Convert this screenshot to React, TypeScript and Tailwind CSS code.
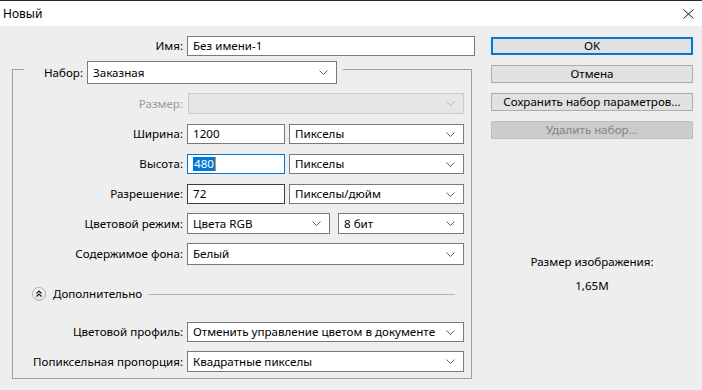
import React from 'react';

const FONT = '"Noto Sans", "Open Sans", sans-serif';

// chevron used by all dropdowns
const Chevron: React.FC<{ disabled?: boolean }> = ({ disabled }) => (
  <svg width="9" height="5" viewBox="0 0 9 5" className="shrink-0">
    <path d="M0.5 0.5 L4.5 4.5 L8.5 0.5" fill="none" stroke={disabled ? '#b8b8b8' : '#606060'} strokeWidth="1" />
  </svg>
);

interface SelectProps {
  value?: string;
  width: string;
  height?: string;
  disabled?: boolean;
}

const Select: React.FC<SelectProps> = ({ value, width, height = 'h-[21px]', disabled }) => (
  <div
    className={`${width} ${height} flex items-center justify-between pl-[5px] pr-[8px] border ${
      disabled ? 'bg-[#e6e6e6] border-[#cccccc]' : 'bg-white border-[#7a7a7a]'
    }`}
  >
    <span className="whitespace-nowrap leading-[16px] text-black">{value}</span>
    <Chevron disabled={disabled} />
  </div>
);

const Input: React.FC<{ value: string; width: string; dark?: boolean }> = ({ value, width, dark }) => (
  <div
    className={`${width} h-[20px] flex items-center pl-[5px] bg-white border ${
      dark ? 'border-[#3c3c3c]' : 'border-[#7a7a7a]'
    }`}
  >
    {value}
  </div>
);

const Label: React.FC<{ children: React.ReactNode; disabled?: boolean }> = ({ children, disabled }) => (
  <span className={`w-[170px] shrink-0 text-right ${disabled ? 'text-[#9a9a9a]' : 'text-black'}`}>{children}</span>
);

const Button: React.FC<{ children: React.ReactNode; primary?: boolean; disabled?: boolean }> = ({
  children,
  primary,
  disabled
}) => (
  <div
    className={`h-[18px] flex items-center justify-center ${
      primary
        ? 'border-2 border-[#0078d7] bg-[#e1e1e1] text-black'
        : disabled
        ? 'border border-[#bfbfbf] bg-[#cccccc] text-[#838383]'
        : 'border border-[#adadad] bg-[#e1e1e1] text-black'
    }`}
  >
    {children}
  </div>
);

export default function App() {
  return (
    <div className="w-[702px] h-[390px] bg-[#eeeeee] text-[11.6px] leading-none text-black overflow-hidden" style={{ fontFamily: FONT }}>
      {/* заголовок окна */}
      <div className="h-[26px] bg-white border-t border-[#2b2b2b] flex items-center justify-between pl-[3px] pr-[8px]">
        <span className="text-[12px]">Новый</span>
        <svg width="11" height="10" viewBox="0 0 11 10">
          <path d="M0.5 0.5 L10.5 9.5 M10.5 0.5 L0.5 9.5" stroke="#1a1a1a" strokeWidth="1" fill="none" />
        </svg>
      </div>

      <div className="flex">
        {/* левая часть */}
        <div className="w-[480px] shrink-0">
          <div className="flex items-center mt-[10px]">
            <span className="w-[183px] text-right">Имя:</span>
            <div className="ml-[4px] w-[288px] h-[20px] flex items-center pl-[5px] bg-white border border-[#7a7a7a]">
              Без имени-1
            </div>
          </div>

          <div className="ml-[12px] mt-[13px] w-[460px] border border-[#a0a0a0] pb-[6px]">
            <div className="-mt-[9px] ml-[11px] w-fit flex items-center bg-[#eeeeee] pr-[6px]">
              <span className="w-[59px] text-right">Набор:</span>
              <div className="ml-[4px]">
                <Select value="Заказная" width="w-[250px]" height="h-[23px]" />
              </div>
            </div>

            <div className="flex items-center mt-[9px]">
              <Label disabled>Размер:</Label>
              <div className="ml-[5px]">
                <Select width="w-[276px]" disabled />
              </div>
            </div>

            <div className="flex items-center mt-[10px]">
              <Label>Ширина:</Label>
              <div className="ml-[4px] flex gap-[4px]">
                <Input value="1200" width="w-[98px]" />
                <Select value="Пикселы" width="w-[175px]" height="h-[20px]" />
              </div>
            </div>

            <div className="flex items-center mt-[10px]">
              <Label>Высота:</Label>
              <div className="ml-[4px] flex gap-[4px]">
                <div className="w-[98px] h-[20px] flex items-center pl-[5px] bg-white border border-[#0078d7]">
                  <span className="bg-[#0078d7] text-white h-[14px] flex items-center px-[1px]">480</span>
                  <span className="w-[1px] h-[14px] bg-[#f28c28]" />
                </div>
                <Select value="Пикселы" width="w-[175px]" height="h-[20px]" />
              </div>
            </div>

            <div className="flex items-center mt-[10px]">
              <Label>Разрешение:</Label>
              <div className="ml-[4px] flex gap-[4px]">
                <Input value="72" width="w-[98px]" dark />
                <Select value="Пикселы/дюйм" width="w-[175px]" height="h-[20px]" />
              </div>
            </div>

            <div className="flex items-center mt-[9px]">
              <Label>Цветовой режим:</Label>
              <div className="ml-[4px] flex gap-[8px]">
                <Select value="Цвета RGB" width="w-[143px]" />
                <Select value="8 бит" width="w-[126px]" />
              </div>
            </div>

            <div className="flex items-center mt-[9px]">
              <Label>Содержимое фона:</Label>
              <div className="ml-[4px]">
                <Select value="Белый" width="w-[277px]" height="h-[22px]" />
              </div>
            </div>

            {/* Дополнительно */}
            <div className="flex items-center mt-[22px] ml-[19px] mr-[16px] h-[14px]">
              <svg width="14" height="14" viewBox="0 0 14 14" className="shrink-0">
                <defs>
                  <linearGradient id="circ" x1="0" y1="0" x2="0" y2="1">
                    <stop offset="0" stopColor="#ffffff" />
                    <stop offset="1" stopColor="#dcdcdc" />
                  </linearGradient>
                </defs>
                <circle cx="7" cy="7" r="6.5" fill="url(#circ)" stroke="#b0b0b0" strokeWidth="1" />
                <path d="M4.5 6.5 L7 4 L9.5 6.5 M4.5 9.5 L7 7 L9.5 9.5" fill="none" stroke="#1a1a1a" strokeWidth="1.2" />
              </svg>
              <span className="ml-[7px]">Дополнительно</span>
              <div className="ml-[6px] flex-1 h-[1px] bg-[#b4b4b4]" />
            </div>

            <div className="flex items-center mt-[21px]">
              <Label>Цветовой профиль:</Label>
              <div className="ml-[4px]">
                <Select value="Отменить управление цветом в документе" width="w-[277px]" height="h-[20px]" />
              </div>
            </div>

            <div className="flex items-center mt-[9px]">
              <Label>Попиксельная пропорция:</Label>
              <div className="ml-[4px]">
                <Select value="Квадратные пикселы" width="w-[277px]" />
              </div>
            </div>
          </div>
        </div>

        {/* правая часть */}
        <div className="ml-[11px] w-[202px] flex flex-col">
          <div className="mt-[11px] flex flex-col gap-[10px]">
            <Button primary>OK</Button>
            <Button>Отмена</Button>
            <Button>Сохранить набор параметров...</Button>
            <Button disabled>Удалить набор...</Button>
          </div>
          <div className="mt-[117px] flex flex-col items-center gap-[12px]">
            <span>Размер изображения:</span>
            <span>1,65M</span>
          </div>
        </div>
      </div>
    </div>
  );
}
